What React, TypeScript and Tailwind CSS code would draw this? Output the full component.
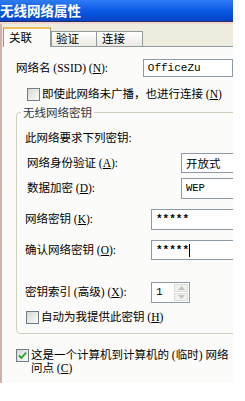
import React from 'react';

const ui = "font-['Liberation_Serif','Noto_Sans_CJK_SC',serif]";
const cjk = "font-['Noto_Sans_CJK_SC',sans-serif]";
const mono = "font-['Liberation_Mono','Noto_Sans_CJK_SC',monospace]";

const CheckBox = ({ checked = false }: { checked?: boolean }) => (
  <span className="w-[13px] h-[13px] shrink-0 border border-[#6d7d8c] bg-gradient-to-br from-[#d8d8d2] to-[#fbfbfa] flex items-center justify-center">
    {checked && (
      <svg width="9" height="9" viewBox="0 0 9 9">
        <path d="M1 4.5 L3.5 7 L8 1.5" stroke="#22a12a" strokeWidth="1.8" fill="none" />
      </svg>
    )}
  </span>
);

const TextBox = ({ children, className = '' }: { children?: React.ReactNode; className?: string }) => (
  <div className={`border border-[#8d9aa6] bg-white flex items-center pl-[4px] ${className}`}>
    {children}
  </div>
);

const Stars = ({ cursor = false }: { cursor?: boolean }) => (
  <span className={`${mono} text-[11px] font-bold leading-none flex items-center`}>
    *****
    {cursor && <span className="w-px h-[13px] bg-black" />}
  </span>
);

export default function App() {
  return (
    <div className={`w-[245px] h-[401px] bg-white overflow-hidden text-black ${ui}`}>
      <div className="w-[233px] h-[383px] flex flex-col overflow-hidden">
        {/* title bar */}
        <div className={`h-[21px] shrink-0 bg-gradient-to-b from-[#2f7cf8] via-[#0b5ae6] to-[#0644c6] flex items-center text-white font-bold text-[13.5px] leading-none ${cjk}`}>
          无线网络属性
        </div>
        <div className="h-px shrink-0 bg-[#2b2a5e]" />
        <div className="h-[2px] shrink-0 bg-[#f3d8d1]" />

        <div className="flex-1 flex flex-col border-l-2 border-[#d6b0a8] bg-[#eeebdf]">
          {/* tabs */}
          <div className={`h-[23px] shrink-0 flex items-end pl-px text-[11.5px] leading-none ${cjk}`}>
            <div className="w-[48px] h-[20px] bg-[#fbfbf9] border-x border-[#919b9c] border-t-2 border-t-[#f0c060] flex items-center pl-[5px]">
              关联
            </div>
            <div className="w-[46px] h-[16px] bg-gradient-to-b from-white to-[#eae9e2] border border-[#919b9c] flex items-center pl-[4px]">
              验证
            </div>
            <div className="w-[46px] h-[16px] bg-gradient-to-b from-white to-[#eae9e2] border border-l-0 border-[#919b9c] flex items-center pl-[5px]">
              连接
            </div>
            <div className="flex-1 h-full border-b border-[#919b9c]" />
          </div>

          {/* panel */}
          <div className="flex-1 bg-[#fbfbf9] flex flex-col text-[11.5px] leading-[13px] overflow-hidden">
            <div className="mt-[12px] h-[18px] flex items-center">
              <span className="ml-[14px] w-[134px]">
                网络名 (SSID) (<u>N</u>):
              </span>
              <TextBox className="w-[95px] h-[18px]">
                <span className={`${mono} text-[11px]`}>OfficeZu</span>
              </TextBox>
            </div>

            <div className="mt-[11px] h-[13px] flex items-center gap-[2px] ml-[25px] whitespace-nowrap">
              <CheckBox />
              <span>即使此网络未广播，也进行连接 (<u>N</u>)</span>
            </div>

            <fieldset className="mt-[5px] ml-[14px] w-[225px] border border-[#d0d0bf] rounded-[4px] pb-[9px]">
              <legend className={`ml-[4px] px-[2px] text-[#2f3440] ${cjk}`}>无线网络密钥</legend>

              <div className="mt-[13px] ml-[8px] h-[12px] flex items-center">此网络要求下列密钥:</div>

              <div className="mt-[9px] h-[20px] flex items-center">
                <span className="ml-[10px] w-[154px]">网络身份验证 (<u>A</u>):</span>
                <TextBox className="w-[70px] h-[20px]">
                  <span className={cjk}>开放式</span>
                </TextBox>
              </div>

              <div className="mt-[5px] h-[21px] flex items-center">
                <span className="ml-[10px] w-[154px]">数据加密 (<u>D</u>):</span>
                <TextBox className="w-[70px] h-[21px]">
                  <span className={`${mono} text-[10.5px]`}>WEP</span>
                </TextBox>
              </div>

              <div className="mt-[10px] h-[21px] flex items-center">
                <span className="ml-[8px] w-[126px]">网络密钥 (<u>K</u>):</span>
                <TextBox className="w-[95px] h-[21px]">
                  <Stars />
                </TextBox>
              </div>

              <div className="mt-[10px] h-[20px] flex items-center">
                <span className="ml-[8px] w-[126px]">确认网络密钥 (<u>O</u>):</span>
                <TextBox className="w-[95px] h-[20px]">
                  <Stars cursor />
                </TextBox>
              </div>

              <div className="mt-[22px] h-[21px] flex items-center">
                <span className="ml-[8px] w-[126px]">密钥索引 (高级) (<u>X</u>):</span>
                <div className="w-[39px] h-[21px] border border-[#8d9aa6] bg-white flex">
                  <span className={`flex-1 pl-[4px] flex items-center ${mono} text-[11px]`}>1</span>
                  <div className="w-[16px] flex flex-col gap-px p-px">
                    <div className="flex-1 bg-[#f1f1ee] border border-[#dcdcd6] flex items-center justify-center">
                      <svg width="7" height="4" viewBox="0 0 7 4"><path d="M0 4 L3.5 0 L7 4 Z" fill="#c4c4bc" /></svg>
                    </div>
                    <div className="flex-1 bg-[#f1f1ee] border border-[#dcdcd6] flex items-center justify-center">
                      <svg width="7" height="4" viewBox="0 0 7 4"><path d="M0 0 L3.5 4 L7 0 Z" fill="#c4c4bc" /></svg>
                    </div>
                  </div>
                </div>
              </div>

              <div className="mt-[8px] h-[13px] flex items-center">
                <span className="ml-[9px] flex items-center gap-[2px]">
                  <CheckBox />
                  <span>自动为我提供此密钥 (<u>H</u>)</span>
                </span>
                <svg className="ml-auto mr-[6px] -mt-[4px]" width="6" height="20" viewBox="0 0 6 20">
                  <path d="M5 1 Q1 10 5 19" stroke="#a8a8a4" strokeWidth="1.2" fill="none" />
                </svg>
              </div>
            </fieldset>

            <div className="mt-[15px] ml-[14px] flex items-start gap-[2px]">
              <CheckBox checked />
              <div className="flex flex-col whitespace-nowrap">
                <span>这是一个计算机到计算机的 (临时) 网络</span>
                <span>问点 (<u>C</u>)</span>
              </div>
            </div>
          </div>
        </div>
      </div>
    </div>
  );
}
